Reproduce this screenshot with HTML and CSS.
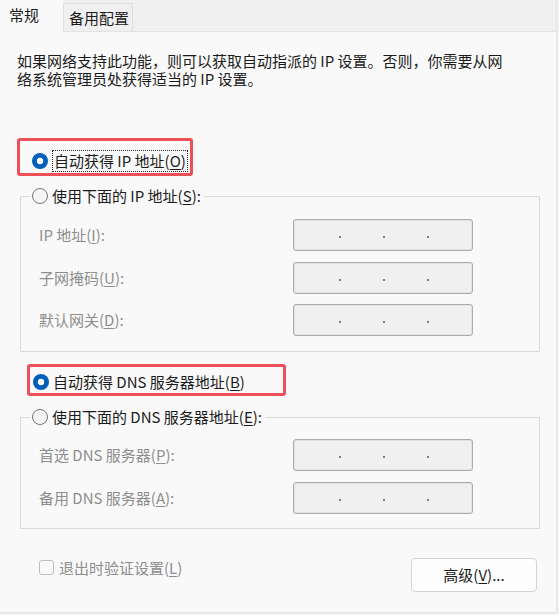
FILE: index.html
```html
<!DOCTYPE html>
<html lang="zh-CN">
<head>
<meta charset="utf-8">
<title>IPv4 属性</title>
<link rel="stylesheet" href="styles.css">
</head>
<body>
<div class="tabs">
  <div class="tab tab-active">常规</div>
  <div class="tab tab-inactive">备用配置</div>
  <div class="tab-fill"></div>
</div>
<div class="panel">
  <p class="desc">如果网络支持此功能，则可以获取自动指派的 IP 设置。否则，你需要从网<br>络系统管理员处获得适当的 IP 设置。</p>

  <div class="mark mark-ip">
    <div class="opt"><span class="radio radio-on"></span><span class="focus">自动获得 IP 地址(<u>O</u>)</span></div>
  </div>

  <fieldset class="group group-ip">
    <legend class="legend"><span class="opt"><span class="radio"></span><span>使用下面的 IP 地址(<u>S</u>):</span></span></legend>
    <div class="fields fields-ip">
      <span class="field-label">IP 地址(<u>I</u>):</span>
      <span class="ipbox"><i></i><i></i><i></i></span>
      <span class="field-label">子网掩码(<u>U</u>):</span>
      <span class="ipbox"><i></i><i></i><i></i></span>
      <span class="field-label">默认网关(<u>D</u>):</span>
      <span class="ipbox"><i></i><i></i><i></i></span>
    </div>
  </fieldset>

  <div class="mark mark-dns">
    <div class="opt"><span class="radio radio-on"></span><span>自动获得 DNS 服务器地址(<u>B</u>)</span></div>
  </div>

  <fieldset class="group group-dns">
    <legend class="legend"><span class="opt"><span class="radio"></span><span>使用下面的 DNS 服务器地址(<u>E</u>):</span></span></legend>
    <div class="fields fields-dns">
      <span class="field-label">首选 DNS 服务器(<u>P</u>):</span>
      <span class="ipbox"><i></i><i></i><i></i></span>
      <span class="field-label">备用 DNS 服务器(<u>A</u>):</span>
      <span class="ipbox"><i></i><i></i><i></i></span>
    </div>
  </fieldset>

  <div class="bottom">
    <div class="check"><span class="checkbox"></span><span>退出时验证设置(<u>L</u>)</span></div>
    <button class="btn" type="button">高级(<u>V</u>)...</button>
  </div>
</div>
</body>
</html>
```

FILE: styles.css
```css
* { box-sizing: border-box; }
html, body { margin: 0; padding: 0; }
body {
  width: 559px;
  height: 615px;
  overflow: hidden;
  background: #f0f0f0;
  font-family: "Noto Sans CJK SC", "Noto Sans", sans-serif;
  font-size: 15px;
  color: #1b1b1b;
}
u { text-decoration: underline; text-underline-offset: 2px; text-decoration-thickness: 1px; }

/* tabs */
.tabs { display: flex; width: 557px; height: 32px; }
.tab { line-height: 20px; white-space: nowrap; }
.tab-active { width: 63px; background: #f9f9f9; padding: 5px 0 0 9px; }
.tab-inactive {
  margin-top: 3px;
  width: 70px;
  padding: 4px 0 0 5px;
  background: #f0f0f0;
  border: 1px solid #dedede;
  border-bottom-color: #e3e3e3;
}
.tab-fill { flex: 1; border-bottom: 1px solid #e3e3e3; border-right: 1px solid #e3e3e3; }

/* panel */
.panel {
  width: 557px;
  height: 581px;
  background: #f9f9f9;
  border-right: 1px solid #e3e3e3;
  border-bottom: 1px solid #e3e3e3;
  padding: 20px 0 0 17px;
}
.desc { margin: 0; line-height: 18px; white-space: nowrap; }

/* red annotation boxes */
.mark { border: 3px solid #ef5057; border-radius: 3px; }
.mark-ip { margin-top: 50px; width: 176px; height: 38px; padding: 9px 0 0 12px; }
.mark-dns { margin: 12px 0 0 10px; width: 259px; height: 32px; padding: 4px 0 0 3px; }

.opt { display: flex; align-items: center; height: 22px; line-height: 20px; white-space: nowrap; }
.radio {
  width: 16px; height: 16px; border-radius: 50%;
  border: 1px solid #747474; background: #f5f5f5;
  margin-right: 4px; flex: none;
}
.radio-on {
  border: none;
  background: radial-gradient(circle, #ffffff 0 3px, #005fb8 3.6px);
}
.focus { border: 1px dotted #2a2a2a; padding: 0 1px; line-height: 20px; }

/* group boxes */
.group {
  margin: 9px 16px 0 3px;
  border: 1px solid #dadada;
  padding: 0 0 15px 9px;
  min-width: 0;
}
.group-dns { margin-top: 10px; padding-bottom: 14px; }
.legend { padding: 0 3px 0 2px; }
.fields {
  display: grid;
  grid-template-columns: 254px 180px;
  row-gap: 10.5px;
  align-items: center;
  padding: 12px 0 0 9px;
}
.fields-dns { padding-top: 11px; }
.field-label { color: #8d8d8d; line-height: 20px; white-space: nowrap; }
.ipbox {
  display: flex; align-items: center; gap: 42px;
  height: 32px;
  padding-left: 45px;
  background: #f0f0f0;
  border: 1px solid #acacac;
  border-radius: 3px;
  box-shadow: inset 0 0 0 1px #e2e2e2;
}
.ipbox i { display: block; width: 2px; height: 2px; background: #7c7c8c; margin-top: 4px; }

/* bottom row */
.bottom {
  display: flex; justify-content: space-between; align-items: flex-start;
  margin: 29px 19px 0 22px;
}
.check { display: flex; align-items: center; height: 20px; color: #8d8d8d; white-space: nowrap; }
.checkbox {
  width: 15px; height: 15px; border: 1px solid #bdbdbd; border-radius: 3px;
  background: #f9f9f9; margin-right: 5px;
}
.btn {
  width: 126px; height: 34px; padding: 0;
  font: inherit; color: #1b1b1b;
  background: #fdfdfd;
  border: 1px solid #d3d3d3;
  border-radius: 4px;
}
```
